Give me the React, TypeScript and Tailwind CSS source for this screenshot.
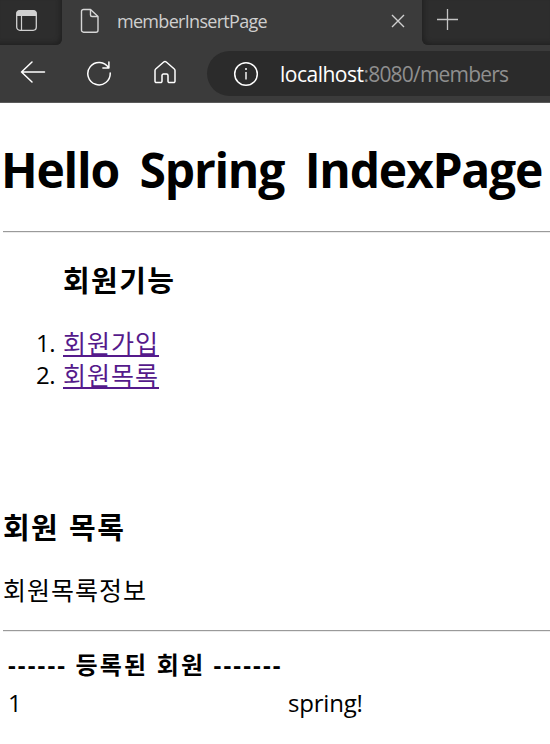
import React from "react";

const TabActionsIcon = () => (
  <svg width="24" height="24" viewBox="0 0 24 24" fill="none" className="shrink-0">
    <rect x="1.7" y="2.7" width="19.6" height="19.6" rx="3.2" stroke="#d0d0d0" strokeWidth="1.3" />
    <path d="M1.500 8V5.500a3 3 0 0 1 3-3h14a3 3 0 0 1 3 3V8z" fill="#d0d0d0" />
    <path d="M6.500 8v14" stroke="#d0d0d0" strokeWidth="1.2" />
  </svg>
);

const PageIcon = () => (
  <svg width="20" height="26" viewBox="0 0 20 26" fill="none" stroke="#d6d6d6" strokeWidth="1.4" strokeLinejoin="round" className="shrink-0">
    <path d="M3.500 1.500h7l7.500 7v13.700a2 2 0 0 1-2 2H3.500a2 2 0 0 1-2-2V3.500a2 2 0 0 1 2-2z" />
    <path d="M10.500 1.500v5.500a1.500 1.500 0 0 0 1.500 1.500H18" />
  </svg>
);

const CloseIcon = () => (
  <svg width="14" height="14" viewBox="0 0 14 14" className="shrink-0">
    <path d="M1 1l12 12M13 1L1 13" stroke="#d0d0d0" strokeWidth="1.4" />
  </svg>
);

const PlusIcon = () => (
  <svg width="22" height="22" viewBox="0 0 22 22" className="shrink-0">
    <path d="M10.500 0v21M0 10.500h21" stroke="#c4c4c4" strokeWidth="1.3" />
  </svg>
);

const BackIcon = () => (
  <svg width="26" height="24" viewBox="0 0 26 24" fill="none" stroke="#fff" strokeWidth="1.5" strokeLinecap="round" strokeLinejoin="round" className="shrink-0">
    <path d="M12 2L1.500 12 12 22M1.500 12h23" />
  </svg>
);

const ReloadIcon = () => (
  <svg width="26" height="26" viewBox="0 0 26 26" fill="none" stroke="#fff" strokeWidth="1.5" strokeLinecap="round" strokeLinejoin="round" className="shrink-0">
    <path d="M22.700 8A11.200 11.200 0 1 0 24.200 13M22.900 2v6h-6" />
  </svg>
);

const HomeIcon = () => (
  <svg width="24" height="24" viewBox="0 0 24 24" fill="none" stroke="#fff" strokeWidth="1.5" strokeLinejoin="round" className="shrink-0">
    <path d="M2 10.500a2 2 0 0 1 .7-1.500l8-7a2 2 0 0 1 2.600 0l8 7a2 2 0 0 1 .7 1.500v10.700a1.400 1.400 0 0 1-1.400 1.400h-4.200A1.400 1.400 0 0 1 15 21.200V15.500a1.400 1.400 0 0 0-1.400-1.400h-3.200A1.400 1.400 0 0 0 9 15.500v5.700a1.400 1.400 0 0 1-1.400 1.400H3.400A1.400 1.400 0 0 1 2 21.200z" />
  </svg>
);

const InfoIcon = () => (
  <svg width="26" height="26" viewBox="0 0 26 26" fill="none" stroke="#fff" className="shrink-0">
    <circle cx="13" cy="13" r="11.3" strokeWidth="1.5" />
    <path d="M13 11v7.500" strokeWidth="1.4" />
    <circle cx="13" cy="8" r="1" fill="#fff" stroke="none" />
  </svg>
);

const Rule = () => <hr className="ml-[3px] h-[2px] border-0 border-t border-b border-t-[#9a9a9a] border-b-[#ececec]" />;

const members = [{ id: 1, name: "spring!" }];

export default function App() {
  return (
    <div className="h-[744px] w-[550px] overflow-hidden bg-white font-['Open_Sans','Noto_Sans_CJK_KR',sans-serif] text-black whitespace-nowrap">
      <header className="flex h-[103px] flex-col border-b border-[#5a5a5a] bg-[#3b3b3b]">
        <div className="flex h-[45px]">
          <div className="w-[62px] rounded-br-[6px] bg-[#2d2d2d] pt-[8px] pl-[15px] shadow-[inset_-3px_-3px_4px_-1px_#222]">
            <TabActionsIcon />
          </div>
          <div className="flex w-[360px] items-start pl-[18px]">
            <div className="pt-[8px]"><PageIcon /></div>
            <span className="mt-[8px] ml-[17px] w-[274px] text-[18px] leading-[26px] tracking-[-0.7px] text-[#cfcfcf]">memberInsertPage</span>
            <div className="pt-[14px]"><CloseIcon /></div>
          </div>
          <div className="flex-1 rounded-bl-[6px] bg-[#2d2d2d] pt-[9px] pl-[15px] shadow-[inset_3px_-3px_4px_-1px_#222]">
            <PlusIcon />
          </div>
        </div>
        <div className="flex h-[57px] items-start">
          <div className="mt-[15px] ml-[20px]"><BackIcon /></div>
          <div className="mt-[15px] ml-[40px]"><ReloadIcon /></div>
          <div className="mt-[15px] ml-[41px]"><HomeIcon /></div>
          <div className="mt-[6px] ml-[30px] flex h-[45px] flex-1 items-center rounded-l-[23px] bg-[#2b2b2b] pl-[26px]">
            <InfoIcon />
            <span className="ml-[21px] text-[21px] leading-[44px] tracking-[-0.8px] text-[#8f8f8f]">
              <span className="tracking-[-0.5px] text-white">localhost</span>:8080/members
            </span>
          </div>
        </div>
      </header>
      <main>
        <h1 className="mt-[35px] h-[64px] pl-px text-[48px] leading-[64px] font-bold tracking-[-1.25px] [word-spacing:9.5px]">Hello Spring IndexPage</h1>
        <div className="mt-[29px]"><Rule /></div>
        <h3 className="mt-[30px] pl-[63px] text-[29px] leading-[36px] font-bold tracking-[1.4px]">회원기능</h3>
        <ol className="mt-[28px] text-[24px] leading-[32px]">
          {["회원가입", "회원목록"].map((label, i) => (
            <li key={label} className="flex">
              <span className="w-[63px] pr-[8px] text-right tracking-[-0.5px]">{i + 1}.</span>
              <a href="#" className="text-[25px] tracking-[1px] text-[#551a8b] underline decoration-2 underline-offset-[2px]">{label}</a>
            </li>
          ))}
        </ol>
        <h3 className="mt-[119px] pl-[3px] text-[29px] leading-[36px] font-bold tracking-[1.4px] [word-spacing:1px]">회원 목록</h3>
        <p className="mt-[28px] pl-[3px] text-[25px] leading-[32px] tracking-[1px]">회원목록정보</p>
        <div className="mt-[24px]"><Rule /></div>
        <div className="mt-[17px] grid grid-cols-[280px_1fr] gap-y-[6px] pl-[8px] text-[24px] leading-[32px]">
          <strong className="font-bold tracking-[2.15px]">------ 등록된 회원 -------</strong>
          <span />
          {members.map((m) => (
            <React.Fragment key={m.id}>
              <span>{m.id}</span>
              <span className="tracking-[-0.2px]">{m.name}</span>
            </React.Fragment>
          ))}
        </div>
      </main>
    </div>
  );
}
